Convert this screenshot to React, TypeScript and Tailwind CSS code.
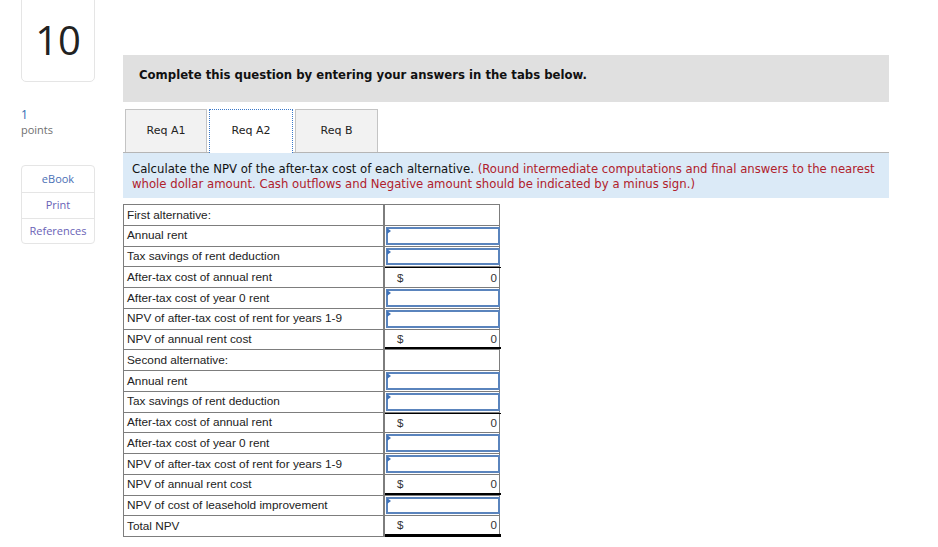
import React from "react";

type Row = {
  label: string;
  kind: "empty" | "input" | "calc";
  line?: "top" | "bottom" | "total";
};

const rows: Row[] = [
  { label: "First alternative:", kind: "empty" },
  { label: "Annual rent", kind: "input" },
  { label: "Tax savings of rent deduction", kind: "input" },
  { label: "After-tax cost of annual rent", kind: "calc", line: "top" },
  { label: "After-tax cost of year 0 rent", kind: "input" },
  { label: "NPV of after-tax cost of rent for years 1-9", kind: "input" },
  { label: "NPV of annual rent cost", kind: "calc", line: "bottom" },
  { label: "Second alternative:", kind: "empty" },
  { label: "Annual rent", kind: "input" },
  { label: "Tax savings of rent deduction", kind: "input" },
  { label: "After-tax cost of annual rent", kind: "calc", line: "top" },
  { label: "After-tax cost of year 0 rent", kind: "input" },
  { label: "NPV of after-tax cost of rent for years 1-9", kind: "input" },
  { label: "NPV of annual rent cost", kind: "calc", line: "bottom" },
  { label: "NPV of cost of leasehold improvement", kind: "input" },
  { label: "Total NPV", kind: "calc", line: "total" },
];

function ValueCell({ row }: { row: Row }) {
  if (row.kind === "input") {
    return (
      <div className="h-full p-px">
        <div className="relative h-full border-2 border-[#5a84bd] bg-white">
          {/* little flag in the corner */}
          <span className="absolute -left-px -top-px h-0 w-0 border-y-[3px] border-l-[4px] border-y-transparent border-l-[#3f72b8]" />
        </div>
      </div>
    );
  }
  if (row.kind === "calc") {
    const lineCls =
      row.line === "top"
        ? "border-t border-t-black"
        : row.line === "bottom"
          ? "border-b-2 border-b-black"
          : "border-b-[3px] border-b-black";
    return (
      <div className={`flex h-full items-center justify-between pl-[12px] pr-[4px] text-[11.6px] text-[#333] ${lineCls}`}>
        <span>$</span>
        <span>0</span>
      </div>
    );
  }
  return <div className="h-full" />;
}

export default function App() {
  return (
    <div className="flex min-h-[547px] w-[938px] overflow-hidden bg-white pl-[21px]">
      {/* Sidebar */}
      <div className="flex w-[74px] flex-col font-['Open_Sans',sans-serif]">
        <div className="-mt-[8px] flex h-[90px] items-center justify-center rounded-b-[5px] border border-[#e5e5e5] pt-[6px] text-[40px] leading-none text-[#222]">
          10
        </div>
        <div className="mt-[25px] text-[12px] leading-[15px] text-[#2f6db3]">1</div>
        <div className="text-[11px] leading-[15px] text-[#6f6f6f]">points</div>
        <div className="mt-[28px] flex flex-col rounded-[4px] border border-[#e5e5e5] text-[11px]">
          <div className="flex h-[27px] items-center justify-center border-b border-[#e5e5e5] text-[#4a70b5]">eBook</div>
          <div className="flex h-[26px] items-center justify-center border-b border-[#e5e5e5] text-[#6a62b6]">Print</div>
          <div className="flex h-[24px] items-center justify-center text-[#6a62b6]">References</div>
        </div>
      </div>

      {/* Main */}
      <div className="ml-[28px] flex w-[766px] flex-col pt-[55px]">
        <div className="h-[47px] bg-[#e0e0e0] pl-[16px] pt-[12px] font-['DejaVu_Sans',sans-serif] text-[11.7px] font-bold leading-[16px] text-[#111]">
          Complete this question by entering your answers in the tabs below.
        </div>

        <div className="mt-[7px] flex gap-[2px] border-b border-[#b5b5b5] pl-[2px] font-['DejaVu_Sans',sans-serif] text-[11px] text-[#222]">
          <div className="flex h-[43px] w-[82px] items-center justify-center border border-b-0 border-[#c4c4c4] bg-[#f2f2f2]">Req A1</div>
          <div className="-mb-px flex h-[44px] w-[84px] items-center justify-center border border-dotted border-b-0 border-[#3a78c9] bg-white">Req A2</div>
          <div className="flex h-[43px] w-[83px] items-center justify-center border border-b-0 border-[#c4c4c4] bg-[#f2f2f2]">Req B</div>
        </div>

        <div className="h-[45px] bg-[#dbeaf7] pl-[9px] pr-[6px] pt-[9px] font-['DejaVu_Sans',sans-serif] text-[11.7px] leading-[15px] text-[#111]">
          Calculate the NPV of the after-tax cost of each alternative.{" "}
          <span className="text-[#b0212c]">
            (Round intermediate computations and final answers to the nearest whole dollar amount. Cash outflows and Negative amount should be indicated by a minus sign.)
          </span>
        </div>

        <div className="mt-[6px] w-[377px] border-t border-l border-r border-[#7d7d7d] font-['Liberation_Sans',Arial,sans-serif]">
          {rows.map((row, i) => (
            <div key={i} className="grid h-[20.75px] grid-cols-[261px_116px] border-b border-[#7d7d7d]">
              <div className="flex items-center border-r-2 border-[#7d7d7d] pl-[3px] pt-px text-[11.8px] text-[#222]">
                {row.label}
              </div>
              <ValueCell row={row} />
            </div>
          ))}
        </div>
      </div>
    </div>
  );
}
